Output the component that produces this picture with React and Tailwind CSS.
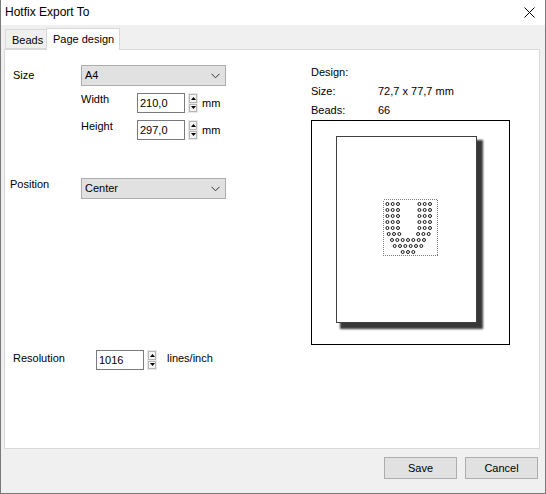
import React from 'react';

const beadRows = [
  [4.4, 9.7, 15, 36.4, 41.7, 47],
  [4.4, 9.7, 15, 36.4, 41.7, 47],
  [4.4, 9.7, 15, 36.4, 41.7, 47],
  [4.4, 9.7, 15, 36.4, 41.7, 47],
  [4.4, 9.7, 15, 36.4, 41.7, 47],
  [5.7, 11, 16.3, 35.1, 40.4, 45.7],
  [9, 14.3, 19.7, 25, 30.3, 35.7, 41],
  [11.7, 17, 22.3, 27.7, 33, 38.3],
  [19.7, 25, 30.3],
];

function Chevron() {
  return (
    <svg width="9" height="6" viewBox="0 0 9 6" className="mr-[5px]">
      <polyline points="0.5,0.8 4.5,4.8 8.5,0.8" fill="none" stroke="#333" strokeWidth="1" />
    </svg>
  );
}

function Combo({ value }) {
  return (
    <div className="w-[145px] h-[21px] bg-[#e1e1e1] border border-[#adadad] flex items-center justify-between pl-[3px]">
      <span>{value}</span>
      <Chevron />
    </div>
  );
}

function Spinner() {
  return (
    <div className="w-[10px] h-[20px] flex flex-col gap-px bg-[#e8e8e8] p-px">
      <div className="flex-1 border border-[#b5b5b5] bg-[#f4f4f4] flex items-center justify-center">
        <svg width="5" height="3" viewBox="0 0 5 3"><polygon points="2.5,0 5,3 0,3" fill="#000" /></svg>
      </div>
      <div className="flex-1 border border-[#b5b5b5] bg-[#f4f4f4] flex items-center justify-center">
        <svg width="5" height="3" viewBox="0 0 5 3"><polygon points="0,0 5,0 2.5,3" fill="#000" /></svg>
      </div>
    </div>
  );
}

function NumField({ value, unit }) {
  return (
    <div className="flex items-center">
      <div className="w-[48px] h-[20px] border border-[#7a7a7a] bg-white flex items-center pl-[2px]">{value}</div>
      <div className="ml-[3px]"><Spinner /></div>
      <span className="ml-[4px]">{unit}</span>
    </div>
  );
}

function Beads() {
  return (
    <svg width="55" height="57" viewBox="0 0 55 57">
      <rect x="0.5" y="0.5" width="54" height="56" fill="none" stroke="#7a7a7a" strokeWidth="1" strokeDasharray="1 1" shapeRendering="crispEdges" />
      {beadRows.map((xs, r) =>
        xs.map((x, i) => (
          <circle key={`${r}-${i}`} cx={x} cy={5 + r * 6} r="1.5" fill="none" stroke="#000" strokeWidth="0.9" />
        ))
      )}
    </svg>
  );
}

export default function App() {
  return (
    <div className="w-[546px] h-[494px] flex flex-col bg-[#f0f0f0] border-x border-b border-[#7a7a7a] text-[11px] text-black font-['Liberation_Sans',Arial,sans-serif] leading-[13px]">
      {/* title bar */}
      <div className="h-[25px] bg-white flex items-center justify-between pl-[4px] pr-[10px]">
        <span className="text-[12px]">Hotfix Export To</span>
        <svg width="11" height="11" viewBox="0 0 11 11">
          <path d="M0.5 0.5 L10.5 10.5 M10.5 0.5 L0.5 10.5" stroke="#000" strokeWidth="1" />
        </svg>
      </div>

      <div className="flex-1 flex flex-col pl-[3px]">
        {/* tabs */}
        <div className="h-[24px] flex items-end">
          <div className="ml-[1px] w-[42px] h-[20px] border border-[#d9d9d9] bg-[#f0f0f0] flex items-center pl-[6px] pt-[2px]">Beads</div>
          <div className="relative z-10 -ml-px -mb-px w-[74px] h-[22px] border border-b-0 border-[#d9d9d9] bg-white flex items-center pl-[6px]">Page design</div>
        </div>

        {/* panel */}
        <div className="w-[536px] h-[400px] bg-white border border-[#d9d9d9] flex">
          {/* left column */}
          <div className="w-[306px] flex flex-col">
            <div className="mt-[15px] flex items-center">
              <span className="pl-[8px] w-[76px]">Size</span>
              <Combo value="A4" />
            </div>
            <div className="mt-[7px] flex items-start pl-[76px]">
              <span className="w-[56px]">Width</span>
              <NumField value="210,0" unit="mm" />
            </div>
            <div className="mt-[7px] flex items-start pl-[76px]">
              <span className="w-[56px]">Height</span>
              <NumField value="297,0" unit="mm" />
            </div>
            <div className="mt-[38px] flex items-start">
              <span className="pl-[5px] w-[76px]">Position</span>
              <Combo value="Center" />
            </div>
            <div className="mt-[151px] flex items-start">
              <span className="pl-[8px] w-[91px] pt-[2px]">Resolution</span>
              <div className="w-[48px] h-[20px] border border-[#7a7a7a] bg-white flex items-center pl-[2px]">1016</div>
              <div className="ml-[3px]"><Spinner /></div>
              <span className="ml-[10px] pt-[2px]">lines/inch</span>
            </div>
          </div>

          {/* right column */}
          <div className="flex flex-col">
            <div className="mt-[13px] h-[19px] flex items-center">Design:</div>
            <div className="h-[19px] flex items-center">
              <span className="w-[67px]">Size:</span>
              <span>72,7 x 77,7 mm</span>
            </div>
            <div className="h-[19px] flex items-center">
              <span className="w-[67px]">Beads:</span>
              <span>66</span>
            </div>
            <div className="w-[199px] h-[225px] border border-black bg-white flex flex-col">
              <div className="ml-[24px] mt-[15px] w-[141px] h-[187px] border border-[#404040] bg-white shadow-[5px_5px_2px_1px_rgba(0,0,0,0.78)] flex flex-col">
                <div className="ml-[46px] mt-[62px]">
                  <Beads />
                </div>
              </div>
            </div>
          </div>
        </div>

        {/* footer */}
        <div className="flex justify-end gap-[8px] pt-[8px] pr-[7px]">
          <div className="w-[73px] h-[22px] bg-[#e1e1e1] border border-[#adadad] flex items-center justify-center">Save</div>
          <div className="w-[73px] h-[22px] bg-[#e1e1e1] border border-[#adadad] flex items-center justify-center">Cancel</div>
        </div>
      </div>
    </div>
  );
}
